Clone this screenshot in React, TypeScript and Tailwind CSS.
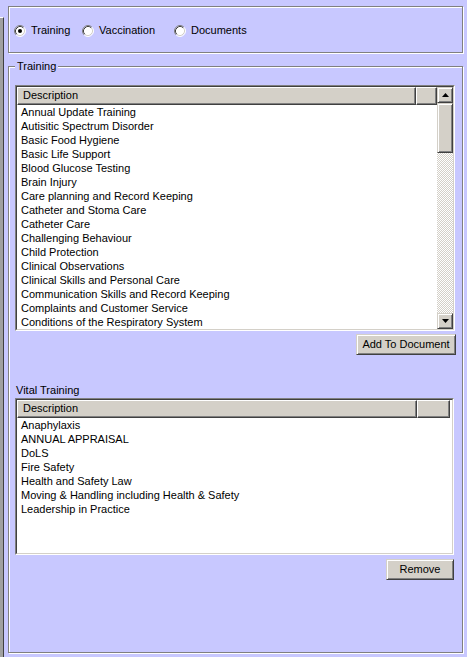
import React from 'react';

const training = [
  'Annual Update Training',
  'Autisitic Spectrum Disorder',
  'Basic Food Hygiene',
  'Basic Life Support',
  'Blood Glucose Testing',
  'Brain Injury',
  'Care planning and Record Keeping',
  'Catheter and Stoma Care',
  'Catheter Care',
  'Challenging Behaviour',
  'Child Protection',
  'Clinical Observations',
  'Clinical Skills and Personal Care',
  'Communication Skills and Record Keeping',
  'Complaints and Customer Service',
  'Conditions of the Respiratory System',
];

const vital = [
  'Anaphylaxis',
  'ANNUAL APPRAISAL',
  'DoLS',
  'Fire Safety',
  'Health and Safety Law',
  'Moving & Handling including Health & Safety',
  'Leadership in Practice',
];

function Radio({ checked }: { checked?: boolean }) {
  return (
    <svg width="12" height="12" viewBox="0 0 12 12" className="shrink-0">
      <circle cx="6" cy="6" r="5" fill="#fff" />
      <path d="M2.11 9.89 A5.5 5.5 0 0 1 9.89 2.11" fill="none" stroke="#808080" strokeWidth="1" />
      <path d="M9.89 2.11 A5.5 5.5 0 0 1 2.11 9.89" fill="none" stroke="#ffffff" strokeWidth="1" />
      <path d="M2.82 9.18 A4.5 4.5 0 0 1 9.18 2.82" fill="none" stroke="#404040" strokeWidth="1" />
      <path d="M9.18 2.82 A4.5 4.5 0 0 1 2.82 9.18" fill="none" stroke="#d4d0c8" strokeWidth="1" />
      {checked && <circle cx="6" cy="6" r="2" fill="#000" />}
    </svg>
  );
}

function Arrow({ up }: { up?: boolean }) {
  return (
    <svg width="7" height="4" viewBox="0 0 7 4">
      {up ? <polygon points="3.5,0 7,4 0,4" fill="#000" /> : <polygon points="0,0 7,0 3.5,4" fill="#000" />}
    </svg>
  );
}

const raised =
  'bg-[#d4d0c8] border border-t-[#d4d0c8] border-l-[#d4d0c8] border-b-[#404040] border-r-[#404040] shadow-[inset_1px_1px_0_#fff,inset_-1px_-1px_0_#808080]';

function HeaderCell({ width, label }: { width: string; label?: string }) {
  return (
    <div
      className={`${width} h-full shrink-0 bg-[#d4d0c8] border border-t-white border-l-white border-b-[#404040] border-r-[#404040] shadow-[inset_-1px_-1px_0_#808080] pl-[5px] leading-[15px]`}
    >
      {label}
    </div>
  );
}

function Button({ label, width }: { label: string; width: string }) {
  return (
    <div className={`${width} h-[21px] flex items-center justify-center self-end ${raised}`}>
      {label}
    </div>
  );
}

export default function App() {
  return (
    <div className="w-[467px] h-[657px] bg-[#c8c8ff] flex overflow-hidden text-[11px] text-black font-['Liberation_Sans',Arial,sans-serif]">
      {/* left window edge */}
      <div className="w-[4px] mt-[17px] bg-[#a0a0a0] border-r border-r-[#404040] border-t border-t-white" />

      <div className="flex-1 flex flex-col pl-[4px] pr-[4px] pt-[6px]">
        {/* option group */}
        <div className="h-[47px] flex items-center pl-[5px] pt-[2px] border border-[#808080] shadow-[inset_1px_1px_0_#fff,1px_1px_0_#fff]">
          <div className="w-[68px] flex items-center gap-[5px]">
            <Radio checked />
            <span>Training</span>
          </div>
          <div className="w-[92px] flex items-center gap-[5px]">
            <Radio />
            <span>Vaccination</span>
          </div>
          <div className="flex items-center gap-[5px]">
            <Radio />
            <span>Documents</span>
          </div>
        </div>

        <fieldset className="mt-[7px] h-[593px] pl-[6px] pr-[7px] border border-[#808080] shadow-[inset_1px_1px_0_#fff,1px_1px_0_#fff] flex flex-col">
          <legend className="px-[2px] leading-[13px] bg-[#c8c8ff]">Training</legend>

          {/* training list */}
          <div className="mt-[12px] h-[246px] border border-t-[#808080] border-l-[#808080] border-b-white border-r-white">
            <div className="h-full border border-t-[#404040] border-l-[#404040] border-b-[#d4d0c8] border-r-[#d4d0c8] bg-white flex">
              <div className="flex-1 flex flex-col overflow-hidden">
                <div className="h-[18px] flex shrink-0">
                  <HeaderCell width="w-[399px]" label="Description" />
                  <HeaderCell width="flex-1" />
                </div>
                {training.map((t) => (
                  <div key={t} className="h-[14px] leading-[14px] pl-[4px] whitespace-nowrap">
                    {t}
                  </div>
                ))}
              </div>
              <div className="w-[16px] flex flex-col">
                <div className={`h-[16px] flex items-center justify-center ${raised}`}>
                  <Arrow up />
                </div>
                <div className={`h-[50px] ${raised}`} />
                <div className="flex-1 bg-[repeating-conic-gradient(#d4d0c8_0%_25%,#ffffff_0%_50%)] bg-[length:2px_2px]" />
                <div className={`h-[16px] flex items-center justify-center ${raised}`}>
                  <Arrow />
                </div>
              </div>
            </div>
          </div>

          <div className="mt-[3px] flex justify-end -mr-[1px]">
            <Button label="Add To Document" width="w-[100px]" />
          </div>

          <div className="mt-[29px] pl-[1px] leading-[13px]">Vital Training</div>

          {/* vital training list */}
          <div className="mt-[1px] w-[439px] h-[157px] border border-t-[#808080] border-l-[#808080] border-b-white border-r-white">
            <div className="h-full border border-t-[#404040] border-l-[#404040] border-b-[#d4d0c8] border-r-[#d4d0c8] bg-white flex flex-col">
              <div className="h-[18px] flex shrink-0">
                <HeaderCell width="w-[400px]" label="Description" />
                <HeaderCell width="w-[33px]" />
              </div>
              {vital.map((t) => (
                <div key={t} className="h-[14px] leading-[14px] pl-[4px] whitespace-nowrap">
                  {t}
                </div>
              ))}
            </div>
          </div>

          <div className="mt-[4px] flex justify-end mr-[1px]">
            <Button label="Remove" width="w-[68px]" />
          </div>
        </fieldset>
      </div>
    </div>
  );
}
